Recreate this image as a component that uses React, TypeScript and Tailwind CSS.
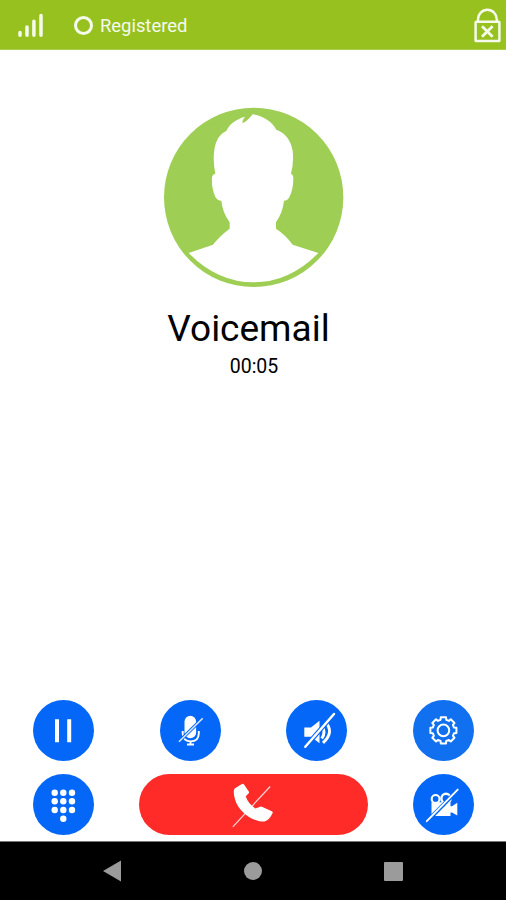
import type { ReactNode } from "react";

function RoundButton({ label, color = "bg-[#0467f8]", children }: { label: string; color?: string; children: ReactNode }) {
  return (
    <button aria-label={label} className={`size-[61px] shrink-0 rounded-full ${color}`}>
      <svg viewBox="0 0 61 61" className="size-full" fill="none">
        {children}
      </svg>
    </button>
  );
}

// Outline of an eight-toothed cog centred in a 61px button.
function gearPath() {
  const pts: string[] = [];
  for (let i = 0; i < 8; i++) {
    const base = (i * Math.PI) / 4 - Math.PI / 2;
    const corners: [number, number][] = [[-0.26, 11], [-0.2, 13.3], [0.2, 13.3], [0.26, 11]];
    for (const [a, r] of corners) {
      pts.push(`${(30.4 + r * Math.cos(base + a)).toFixed(2)} ${(30.4 + r * Math.sin(base + a)).toFixed(2)}`);
    }
  }
  return `M${pts.join("L")}Z`;
}

function Avatar() {
  return (
    <svg viewBox="0 0 600 600" className="ml-[2px] size-[200px]">
      <circle cx="299" cy="298" r="269" fill="#9fce55" />
      <path
        fill="white"
        d="M104 465L177 440Q197 414 227 392V373Q205 342 202 308Q190 308 184 297Q172 270 174 239Q175 229 184 227Q176 187 181 156C185 127 198 107 217 99C225 79 245 64 273 56Q265 64 265 76Q280 70 296 49C326 54 353 69 367 95C395 105 411 128 416 159Q420 194 411 227Q419 230 418 242Q418 275 405 299Q400 308 390 308Q386 344 366 373V392Q395 411 416 440L493 465Q407 553 299 553Q190 553 104 465Z"
      />
    </svg>
  );
}

export default function App() {
  return (
    <div className="flex h-[900px] w-[506px] flex-col bg-white font-[Roboto,sans-serif] text-black">
      <header className="flex h-[50px] shrink-0 items-center border-b border-[#a8ce4c] bg-[#97c11f] pl-[18px]">
        <svg viewBox="0 0 26 26" className="size-[26px]" stroke="#f5faec" strokeWidth="3.5" strokeLinecap="round">
          <path d="M2 20.6V23.2M9 14.9V23.2M15.9 9.2V23.2M23 3.5V23.2" />
        </svg>
        <span className="mt-[1px] ml-[30px] size-[19px] rounded-full border-[3px] border-[#f5faec]" />
        <span className="mt-[2px] ml-[7px] text-[18.4px] leading-[22px] text-[#f5faec]">Registered</span>
        <svg viewBox="0 0 32 40" className="ml-auto h-[40px] w-[32px]" fill="none" stroke="#f5faec">
          <path d="M4 16.7V14.5A9.4 9.8 0 0 1 22.8 14.5V16.7" strokeWidth="2.4" />
          <rect x="1.6" y="16.8" width="23.8" height="19.2" rx=".6" strokeWidth="2.5" />
          <path d="M8 21.2L18.6 31.8M18.6 21.2L8 31.8" strokeWidth="2.8" />
        </svg>
      </header>

      <main className="flex flex-1 flex-col items-center pt-[48px]">
        <Avatar />
        <h1 className="mt-[8px] mr-[9px] text-[37px] leading-[46px]">Voicemail</h1>
        <p className="mt-[4px] ml-[2px] text-[19.5px] leading-[22px]">00:05</p>
      </main>

      <section className="flex flex-col gap-[13px] pr-[32px] pb-[6px] pl-[33px]">
        <div className="flex justify-between">
          <RoundButton label="Hold">
            <path d="M24 21.3V40.3M36.2 21.3V40.3" stroke="white" strokeWidth="4" strokeLinecap="square" />
          </RoundButton>
          <RoundButton label="Mute">
            <rect x="24.5" y="15.8" width="11.6" height="22.5" rx="5.8" fill="white" />
            <path d="M22.7 31V33.5Q23 41.4 30.8 41.4Q38.5 41.4 38.8 33.5V31" stroke="white" strokeWidth="1.9" />
            <path d="M30.5 41V44.5M27 44.5H34" stroke="white" strokeWidth="1.8" />
            <path d="M19 41.5L42.5 18.5" stroke="#0467f8" strokeWidth="3.2" />
            <path d="M19 41.8L42.7 18.3" stroke="#dbe9ff" strokeWidth="1.6" />
          </RoundButton>
          <RoundButton label="Speaker">
            <path d="M18.3 27.5H25L33.5 20.7V43.3L25 36.7H18.3Z" fill="white" />
            <path d="M35.8 26Q40.2 32 35.8 38.5M39 21.5Q49 32 37 42.8" stroke="white" strokeWidth="3" />
            <path d="M18.8 47.5L48 14" stroke="#0467f8" strokeWidth="4.6" />
            <path d="M19.3 46.8L48 14" stroke="white" strokeWidth="2.5" strokeLinecap="round" />
          </RoundButton>
          <RoundButton label="Settings" color="bg-[#1070f0]">
            <path d={gearPath()} stroke="white" strokeWidth="2" strokeLinejoin="round" />
            <circle cx="30.4" cy="30.4" r="5.8" stroke="white" strokeWidth="2" />
          </RoundButton>
        </div>

        <div className="flex justify-between">
          <RoundButton label="Keypad">
            {[18.7, 27.3, 36].map((y) => [21.7, 30.3, 39].map((x) => <circle key={`${x}-${y}`} cx={x} cy={y} r="3.2" fill="white" />))}
            <circle cx="30.3" cy="44.7" r="3.2" fill="white" />
          </RoundButton>
          <button aria-label="End call" className="h-[61px] w-[229px] rounded-full bg-[#fe2b29]">
            <svg viewBox="0 0 229 61" className="size-full" fill="none">
              <path d="M93.8 52.8L131.2 12.5" stroke="#ffd8d7" strokeWidth="1.2" />
              <path
                fill="white"
                d="M102.5 10.2Q104 9 105 10.5L109.8 17.4Q110.6 18.7 109.3 19.8L106.7 22.2Q109 29.5 116.5 34.5L120.4 32.9Q122 32.2 123.5 33L132.8 37.2Q134.3 38.1 133.4 39.6Q130 46.6 125.5 47.5C115 48.5 100 38.5 96.2 26C94 18.5 94.8 15.2 95.7 14.4Z"
              />
            </svg>
          </button>
          <RoundButton label="Camera">
            <circle cx="22.6" cy="24.9" r="3.9" stroke="white" strokeWidth="2.1" />
            <circle cx="33" cy="24.4" r="4.6" stroke="white" strokeWidth="2.4" />
            <path d="M18.5 28.3H37.5V32.2H39L44.3 28.8V41.6L39 38.6H37.5V42H18.5Z" fill="white" />
            <path d="M14.3 47.2L45.2 15.6" stroke="#0467f8" strokeWidth="4" />
            <path d="M13.8 47.2L44.7 15.6" stroke="white" strokeWidth="1.9" strokeLinecap="round" />
          </RoundButton>
        </div>
      </section>

      <nav className="flex h-[59px] shrink-0 items-center border-t border-[#777777] bg-black pl-[102px]">
        <svg viewBox="0 0 20 22" className="h-[22px] w-[20px]">
          <path d="M1 11L19 .5V21.5Z" fill="#9b9b9b" />
        </svg>
        <span className="ml-[122px] size-[18px] rounded-full bg-[#9b9b9b]" />
        <span className="ml-[122px] size-[19px] rounded-[1px] bg-[#9b9b9b]" />
      </nav>
    </div>
  );
}
